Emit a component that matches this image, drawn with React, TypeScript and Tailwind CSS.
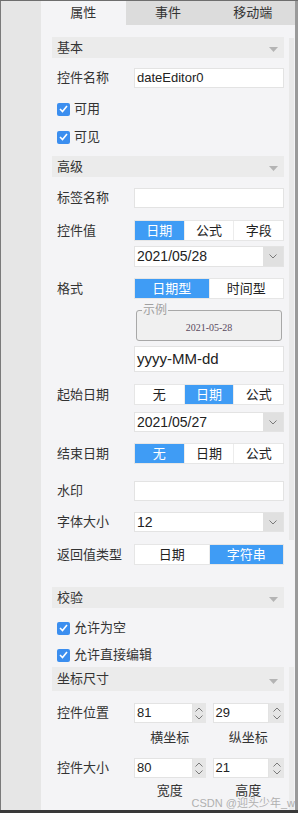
import React from "react";

const FONT = "font-[family-name:'Liberation_Sans','Noto_Sans_CJK_SC',sans-serif]";

function Tri() {
  return (
    <svg width="9" height="5" viewBox="0 0 9 5" className="mt-[4px]">
      <polygon points="0,0 9,0 4.5,5" fill="#b4b4b4" />
    </svg>
  );
}

function Header({ label, className }: { label: string; className: string }) {
  return (
    <div className={`flex items-center justify-between bg-[#ebebeb] pl-[5px] pr-[6px] text-[13px] text-[#333] ${className}`}>
      <span>{label}</span>
      <Tri />
    </div>
  );
}

function Row({ label, children, className }: { label?: string; children: React.ReactNode; className: string }) {
  return (
    <div className={`flex items-center ${className}`}>
      <div className="w-[82px] shrink-0 pl-[5px] text-[13px] text-[#333]">{label}</div>
      <div className="w-[150px] h-full">{children}</div>
    </div>
  );
}

function Input({ value, size = "text-[13px]" }: { value?: string; size?: string }) {
  return (
    <div className={`flex h-full items-center border border-[#e3e3e3] bg-white pl-[2px] text-[#222] ${size}`}>{value}</div>
  );
}

function Chevron({ up = false }: { up?: boolean }) {
  return (
    <svg width="8" height="5" viewBox="0 0 8 5">
      <polyline
        points={up ? "0.5,4.5 4,1 7.5,4.5" : "0.5,0.5 4,4 7.5,0.5"}
        fill="none"
        stroke="#7a7a7a"
        strokeWidth="1"
      />
    </svg>
  );
}

function Select({ value }: { value: string }) {
  return (
    <div className="flex h-full border border-[#e3e3e3] bg-white">
      <div className="flex flex-1 items-center pl-[2px] text-[14px] text-[#222]">{value}</div>
      <div className="flex w-[20px] items-center justify-center bg-[#e0e0e0]">
        <Chevron />
      </div>
    </div>
  );
}

function Seg({ items, active }: { items: string[]; active: number }) {
  return (
    <div className="flex h-full border border-[#e6e6e6] bg-white">
      {items.map((it, i) => (
        <div
          key={i}
          className={`flex flex-1 items-center justify-center text-[13px] ${
            i === active ? "bg-[#3f9cf5] text-white" : "text-[#222]"
          } ${i > 0 ? "border-l border-[#ececec]" : ""}`}
        >
          {it}
        </div>
      ))}
    </div>
  );
}

function Check() {
  return (
    <div className="flex h-[13px] w-[13px] items-center justify-center rounded-[2px] bg-[#3b8eef]">
      <svg width="9" height="8" viewBox="0 0 9 8">
        <polyline points="1,4 3.5,6.5 8,1" fill="none" stroke="white" strokeWidth="1.6" />
      </svg>
    </div>
  );
}

function CheckRow({ label, className }: { label: string; className: string }) {
  return (
    <div className={`flex h-[24px] items-center gap-[4px] pl-[5px] text-[13px] text-[#333] ${className}`}>
      <Check />
      <span>{label}</span>
    </div>
  );
}

function Spin({ value, spinW }: { value: string; spinW: string }) {
  return (
    <div className="flex h-full flex-1">
      <div className="flex flex-1 items-center border border-[#e3e3e3] bg-white pl-[2px] text-[13px] text-[#222]">{value}</div>
      <div className={`flex flex-col items-center justify-center gap-[3px] bg-[#e6e6e6] ${spinW}`}>
        <Chevron up />
        <Chevron />
      </div>
    </div>
  );
}

export default function App() {
  return (
    <div className={`relative flex h-[813px] w-[298px] flex-col overflow-hidden bg-[#f4f4f6] ${FONT}`}>
      <div className="h-[1px] bg-[#6e6e6e]" />
      <div className="flex flex-1">
        <div className="w-[41px] border-l border-[#7a7a7a] bg-[#e6e6e6]" />
        <div className="flex w-[254px] flex-col">
          <div className="grid h-[24px] grid-cols-3 text-[13px] text-[#333]">
            <div className="flex items-center justify-center bg-[#f4f4f6]">属性</div>
            <div className="flex items-center justify-center bg-[#dcdcdc]">事件</div>
            <div className="flex items-center justify-center bg-[#dcdcdc]">移动端</div>
          </div>
          <div className="flex flex-col px-[11px] pt-[12px]">
            <Header label="基本" className="h-[21px]" />
            <Row label="控件名称" className="mt-[10px] h-[20px]">
              <Input value="dateEditor0" />
            </Row>
            <CheckRow label="可用" className="mt-[9px]" />
            <CheckRow label="可见" className="mt-[4px]" />
            <Header label="高级" className="mt-[7px] h-[21px]" />
            <Row label="标签名称" className="mt-[11px] h-[20px]">
              <Input />
            </Row>
            <Row label="控件值" className="mt-[12px] h-[21px]">
              <Seg items={["日期", "公式", "字段"]} active={0} />
            </Row>
            <Row className="mt-[5px] h-[21px]">
              <Select value="2021/05/28" />
            </Row>
            <Row label="格式" className="mt-[11px] h-[21px]">
              <Seg items={["日期型", "时间型"]} active={0} />
            </Row>
            <Row className="mt-[5px] h-[37px]">
              <fieldset className="mx-[2px] h-full rounded-[3px] border border-[#a8a8a8] bg-[#f0f0f0] px-[5px]">
                <legend className="px-[1px] text-[12px] leading-[12px] text-[#a0a0a0]">示例</legend>
                <div className="mt-[4px] text-center font-[family-name:'Liberation_Serif',serif] text-[10px] text-[#5a4a5e]">
                  2021-05-28
                </div>
              </fieldset>
            </Row>
            <Row className="mt-[5px] h-[26px]">
              <Input value="yyyy-MM-dd" size="text-[15px]" />
            </Row>
            <Row label="起始日期" className="mt-[12px] h-[21px]">
              <Seg items={["无", "日期", "公式"]} active={1} />
            </Row>
            <Row className="mt-[7px] h-[20px]">
              <Select value="2021/05/27" />
            </Row>
            <Row label="结束日期" className="mt-[11px] h-[21px]">
              <Seg items={["无", "日期", "公式"]} active={0} />
            </Row>
            <Row label="水印" className="mt-[17px] h-[20px]">
              <Input />
            </Row>
            <Row label="字体大小" className="mt-[11px] h-[20px]">
              <Select value="12" />
            </Row>
            <Row label="返回值类型" className="mt-[12px] h-[21px]">
              <Seg items={["日期", "字符串"]} active={1} />
            </Row>
            <Header label="校验" className="mt-[22px] h-[21px]" />
            <CheckRow label="允许为空" className="mt-[8px]" />
            <CheckRow label="允许直接编辑" className="mt-[3px]" />
            <Header label="坐标尺寸" className="h-[24px]" />
            <Row label="控件位置" className="mt-[12px] h-[20px]">
              <div className="flex h-full gap-[7px]">
                <Spin value="81" spinW="w-[13px]" />
                <Spin value="29" spinW="w-[15px]" />
              </div>
            </Row>
            <Row className="mt-[5px] h-[20px]">
              <div className="flex h-full gap-[7px] text-[13px] text-[#333]">
                <div className="flex flex-1 items-center justify-center">横坐标</div>
                <div className="flex flex-1 items-center justify-center">纵坐标</div>
              </div>
            </Row>
            <Row label="控件大小" className="mt-[10px] h-[20px]">
              <div className="flex h-full gap-[7px]">
                <Spin value="80" spinW="w-[13px]" />
                <Spin value="21" spinW="w-[15px]" />
              </div>
            </Row>
            <Row className="mt-[3px] h-[20px]">
              <div className="flex h-full gap-[7px] text-[13px] text-[#333]">
                <div className="flex flex-1 items-center justify-center">宽度</div>
                <div className="flex flex-1 items-center justify-center">高度</div>
              </div>
            </Row>
          </div>
        </div>
        <div className="w-[3px] bg-[#9a9a9a]" />
      </div>
      <div className="h-[3px] bg-[#3a3a3a]" />
      <div className="absolute left-[289px] top-[38px] h-[502px] w-[5px] bg-[#e9e9e9]" />
      <div className="absolute left-[289px] top-[667px] h-[143px] w-[5px] bg-[#ececec]" />
      <div className="absolute right-[3px] top-[797px] text-[11px] leading-[12px] text-[#b0b0b0]">CSDN @迎头少年_w</div>
    </div>
  );
}
